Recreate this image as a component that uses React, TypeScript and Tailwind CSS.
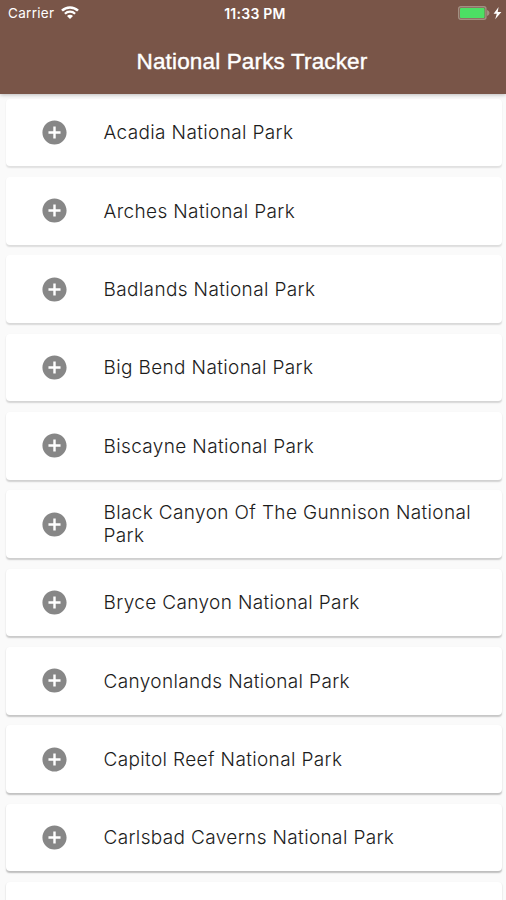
const parks = [
  "Acadia National Park",
  "Arches National Park",
  "Badlands National Park",
  "Big Bend National Park",
  "Biscayne National Park",
  "Black Canyon Of The Gunnison National Park",
  "Bryce Canyon National Park",
  "Canyonlands National Park",
  "Capitol Reef National Park",
  "Carlsbad Caverns National Park",
];

// shadows get deeper further down the screen
function cardShadow(index: number) {
  const alpha = 0.1 + index * 0.016;
  return `0 1.5px 1.5px rgba(0, 0, 0, ${alpha.toFixed(3)})`;
}

function WifiIcon() {
  return (
    <svg width="18" height="14" viewBox="0 0 18 14" fill="none">
      <path d="M1 4.7a11.3 11.3 0 0 1 16 0" stroke="white" strokeWidth="2.5" />
      <path d="M3.9 7.7a7.2 7.2 0 0 1 10.2 0" stroke="white" strokeWidth="2.2" />
      <path d="M9 12.9 6 9.9a4.2 4.2 0 0 1 6 0Z" fill="white" />
    </svg>
  );
}

function BatteryIcon() {
  return (
    <svg width="44" height="14" viewBox="0 0 44 14" fill="none">
      <rect x="0.7" y="0.7" width="27.2" height="12.6" rx="2" stroke="#a29082" strokeWidth="1.4" />
      <rect x="2" y="2" width="24.6" height="10" rx="0.8" fill="#4cdf64" />
      <path d="M28.9 4c3.4 1 3.4 5 0 6Z" fill="#a29082" />
      <path d="M40.6 1 35.6 7.8h3.2L37.2 13.2 43.4 6h-3.7Z" fill="white" />
    </svg>
  );
}

function AddIcon() {
  return (
    <svg width="29" height="29" viewBox="0 0 24 24" fill="#878787">
      <path d="M12 2C6.48 2 2 6.48 2 12s4.48 10 10 10 10-4.48 10-10S17.52 2 12 2zm5 11h-4v4h-2v-4H7v-2h4V7h2v4h4v2z" />
    </svg>
  );
}

function StatusBar() {
  return (
    <div className="grid h-[26px] grid-cols-3 items-center pl-2 pr-[4px]">
      <div className="flex items-center gap-[7px]">
        <span className="text-[13.5px] tracking-[0.3px]">Carrier</span>
        <WifiIcon />
      </div>
      <span className="text-center text-[14px] font-semibold tracking-[0.25px]">11:33 PM</span>
      <div className="flex justify-end">
        <BatteryIcon />
      </div>
    </div>
  );
}

function ParkCard({ name, index }: { name: string; index: number }) {
  return (
    <li
      className="flex h-[67.5px] shrink-0 items-center rounded-[4px] bg-white pl-[33.5px]"
      style={{ boxShadow: cardShadow(index) }}
    >
      <AddIcon />
      <span className="ml-[35px] w-[385px] pt-[0.5px] text-[19px] leading-[23px] tracking-[0.36px]">
        {name}
      </span>
    </li>
  );
}

export default function App() {
  return (
    <div className="flex h-[900px] w-[506px] flex-col overflow-hidden bg-[#fafafa] font-['Inter',sans-serif]">
      <header className="z-10 h-[94px] shrink-0 bg-[#795548] text-white shadow-[0_1px_4px_rgba(0,0,0,0.25)]">
        <StatusBar />
        <h1 className="pr-[2px] pt-[21px] text-center font-['Liberation_Sans',sans-serif] text-[22.5px] leading-[30px] tracking-[0.15px] [-webkit-text-stroke:0.4px_white]">
          National Parks Tracker
        </h1>
      </header>
      <ul className="flex flex-col gap-[10.83px] pl-[6px] pr-[4px] pt-[4.8px] font-light text-[#1c1c1c]">
        {parks.map((park, i) => (
          <ParkCard key={park} name={park} index={i} />
        ))}
        <li
          className="h-[20px] shrink-0 rounded-t-[4px] bg-white"
          style={{ boxShadow: cardShadow(parks.length) }}
        />
      </ul>
    </div>
  );
}
